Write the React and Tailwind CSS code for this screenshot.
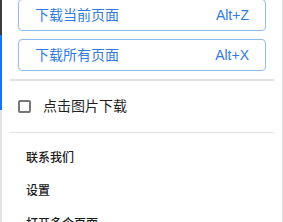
import React, { useState } from 'react';

const menuItems = ['联系我们', '设置', '打开多个页面'];

export default function App() {
  const [clickDownload, setClickDownload] = useState(false);

  return (
    <div
      className="flex h-[222px] w-[283px] overflow-hidden bg-white"
      style={{ fontFamily: '"Liberation Sans", "Noto Sans CJK SC", sans-serif' }}
    >
      {/* page behind the popup */}
      <div className="flex w-[2px] shrink-0 flex-col">
        <div className="h-[35px] shrink-0 bg-[#3c3c3c]" />
        <div className="h-[75px] shrink-0 bg-[#1a73e8]" />
        <div className="flex-1 bg-[#e4e4e4]" />
      </div>

      <div className="flex flex-1 flex-col border-r border-[#dcdcdc]">
        <div className="-mt-[1px] flex shrink-0 flex-col gap-2 px-4 pb-2">
          <button className="flex h-8 shrink-0 items-center justify-between rounded border border-[#8fbbee] px-4 text-[14px] text-[#2f7be0]">
            <span>下载当前页面</span>
            <span>Alt+Z</span>
          </button>
          <button className="flex h-8 shrink-0 items-center justify-between rounded border border-[#8fbbee] px-4 text-[14px] text-[#2f7be0]">
            <span>下载所有页面</span>
            <span>Alt+X</span>
          </button>
        </div>

        <div className="mx-2 h-[2px] shrink-0 bg-[#e2e2e2]" />

        <label className="flex h-[51px] shrink-0 cursor-pointer items-center gap-3 px-4">
          <input
            type="checkbox"
            checked={clickDownload}
            onChange={() => setClickDownload(!clickDownload)}
            className="h-[13px] w-[13px] appearance-none rounded-[2px] border-2 border-[#777777] bg-white"
          />
          <span className="text-[14px] text-[#1f1f1f]">点击图片下载</span>
        </label>

        <div className="mx-2 h-px shrink-0 bg-[#e2e2e2]" />

        <div className="flex shrink-0 flex-col pt-2">
          {menuItems.map((item) => (
            <div key={item} className="flex h-[33px] shrink-0 items-center px-6 text-[12px] font-medium text-[#1a1a1a]">
              {item}
            </div>
          ))}
        </div>
      </div>
    </div>
  );
}
